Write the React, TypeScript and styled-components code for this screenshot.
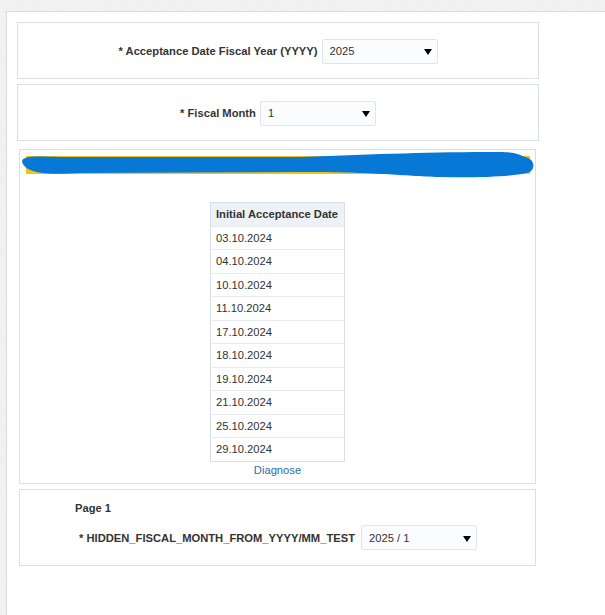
import React from 'react';
import styled, { createGlobalStyle } from 'styled-components';

const GlobalStyle = createGlobalStyle`
    html, body {
        margin: 0;
        padding: 0;
        overflow: hidden;
    }
    body {
        background-color: #f3f3f3;
        background-image: repeating-linear-gradient(45deg, #ededed 0 1px, transparent 1px 3px);
        font-family: "Liberation Sans", Arial, sans-serif;
        font-size: 11.2px;
        color: #333;
    }
`;

const Shell = styled.div`
    margin: 11px 0 0 6px;
    width: calc(100vw - 6px);
    min-height: 620px;
    box-sizing: border-box;
    background: #fff;
    border-top: 1px solid #d5dce4;
    border-left: 1px solid #d5dce4;
    padding: 10px 0 0 10px;
    display: flex;
    flex-direction: column;
`;

const Panel = styled.div<{ $width: number; $height: number; $gap: number; $inset?: number; }>`
    box-sizing: border-box;
    width: ${props => props.$width}px;
    height: ${props => props.$height}px;
    margin-top: ${props => props.$gap}px;
    margin-left: ${props => props.$inset || 0}px;
    border: 1px solid #d9e0e8;
    background: #fff;
`;

const FieldPanel = styled(Panel)`
    display: flex;
    align-items: center;
    justify-content: center;
    padding-top: 1px;
`;

const Field = styled.div`
    display: flex;
    align-items: center;
    gap: 4px;
`;

const Label = styled.label`
    font-weight: bold;
    color: #333;
    white-space: nowrap;
`;

const Select = styled.div`
    box-sizing: border-box;
    width: 116px;
    height: 25px;
    border: 1px solid #dfe5ec;
    border-radius: 2px;
    background: #fbfcfd;
    display: flex;
    align-items: center;
    justify-content: space-between;
    padding: 0 5px 0 7px;
    color: #333;
    .arrow{
        width: 0;
        height: 0;
        margin-top: 2px;
        border-left: 4px solid transparent;
        border-right: 4px solid transparent;
        border-top: 6px solid #000;
    }
`;

const ReportPanel = styled(Panel)`
    position: relative;
    display: flex;
    flex-direction: column;
    align-items: center;
`;

const Banner = styled.div`
    align-self: stretch;
    height: 18px;
    margin: 6px 5px 0 6px;
    background: #f1c40f;
`;

const Scribble = styled.svg`
    position: absolute;
    left: 0;
    top: 0;
    width: 516px;
    height: 32px;
`;

const DateTable = styled.table`
    margin-top: 28px;
    width: 135px;
    border-collapse: collapse;
    border: 1px solid #d8dee6;
    th, td{
        box-sizing: border-box;
        text-align: left;
        padding: 0 5px;
        white-space: nowrap;
    }
    th{
        height: 23.7px;
        background: #eef2f6;
        font-weight: bold;
        color: #333;
    }
    td{
        height: 23.5px;
        border-top: 1px solid #e6eaef;
        color: #333;
    }
`;

const Link = styled.a`
    color: #2e6bb0;
    text-decoration: none;
    margin-top: 2px;
    cursor: pointer;
`;

const PagePanel = styled(Panel)`
    display: flex;
    flex-direction: column;
    padding: 12px 0 0 55px;
    gap: 11px;
    h3{
        margin: 0;
        font-size: 11.2px;
        font-weight: bold;
        color: #333;
    }
    > .row{
        display: flex;
        align-items: center;
        gap: 6px;
        padding-left: 4px;
    }
`;

const dates = [
    '03.10.2024', '04.10.2024', '10.10.2024', '11.10.2024', '17.10.2024',
    '18.10.2024', '19.10.2024', '21.10.2024', '25.10.2024', '29.10.2024',
];

const Dropdown: React.FC<{ value: string; }> = ({ value }) => (
    <Select>
        <span>{value}</span>
        <span className="arrow" />
    </Select>
);

const App: React.FC = () => {
    return (
    <>
        <GlobalStyle />
        <Shell>
            <FieldPanel $width={522} $height={57} $gap={0}>
                <Field>
                    <Label>* Acceptance Date Fiscal Year (YYYY)</Label>
                    <Dropdown value="2025" />
                </Field>
            </FieldPanel>
            <FieldPanel $width={522} $height={57} $gap={5}>
                <Field>
                    <Label>* Fiscal Month</Label>
                    <Dropdown value="1" />
                </Field>
            </FieldPanel>
            <ReportPanel $width={517} $height={335} $gap={8} $inset={2}>
                <Banner />
                <Scribble viewBox="0 0 516 32">
                    <path
                        fill="#0878d6"
                        d="M 2 12 C 2 6, 12 6, 40 7 L 280 7 C 360 4, 410 2, 480 2 C 495 2, 500 5, 505 7 C 514 9, 516 17, 510 22 C 500 26, 460 28, 420 27 C 380 26, 360 22, 280 22 L 60 23 C 30 25, 6 24, 2 12 Z"
                    />
                </Scribble>
                <DateTable>
                    <thead>
                        <tr><th>Initial Acceptance Date</th></tr>
                    </thead>
                    <tbody>
                        {dates.map(d => <tr key={d}><td>{d}</td></tr>)}
                    </tbody>
                </DateTable>
                <Link>Diagnose</Link>
            </ReportPanel>
            <PagePanel $width={517} $height={77} $gap={5} $inset={2}>
                <h3>Page 1</h3>
                <div className="row">
                    <Label>* HIDDEN_FISCAL_MONTH_FROM_YYYY/MM_TEST</Label>
                    <Dropdown value="2025 / 1" />
                </div>
            </PagePanel>
        </Shell>
    </>
  );
};

export default App;
